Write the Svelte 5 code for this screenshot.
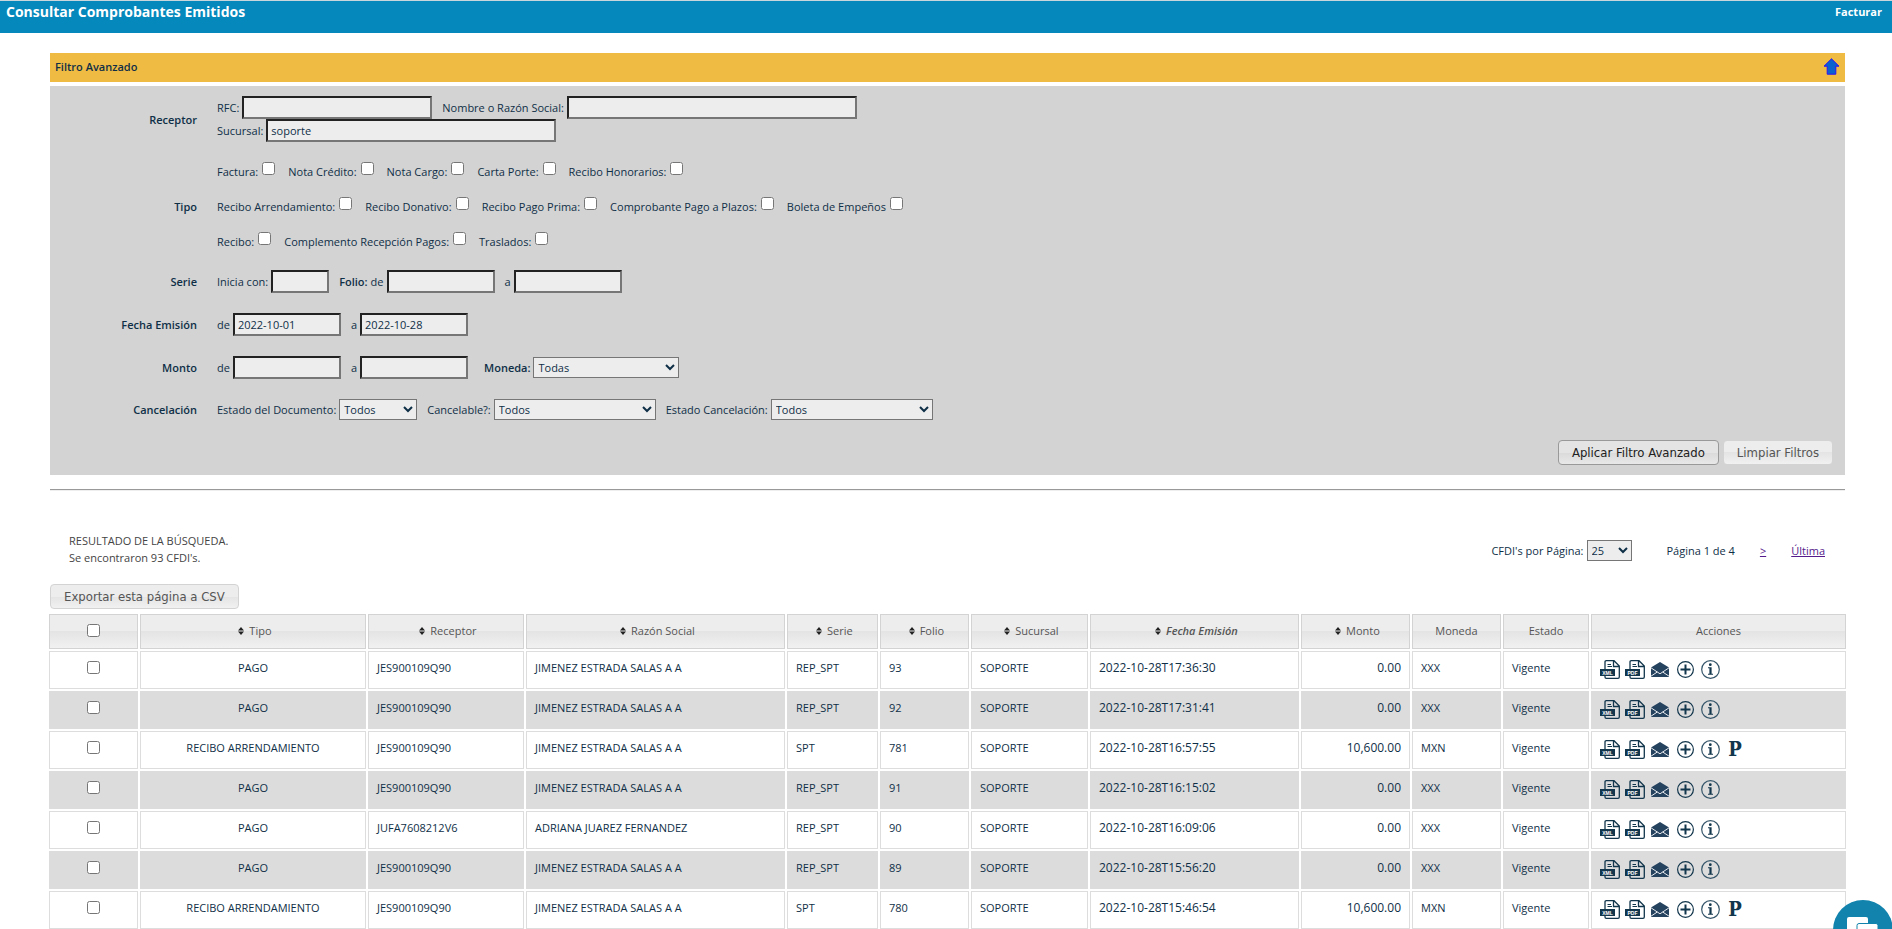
<script>
    const tipos = [
        ["Factura:", "Nota Crédito:", "Nota Cargo:", "Carta Porte:", "Recibo Honorarios:"],
        [
            "Recibo Arrendamiento:",
            "Recibo Donativo:",
            "Recibo Pago Prima:",
            "Comprobante Pago a Plazos:",
            "Boleta de Empeños",
        ],
        ["Recibo:", "Complemento Recepción Pagos:", "Traslados:"],
    ];

    const columns = [
        { name: "Tipo", width: 226, sort: true },
        { name: "Receptor", width: 156, sort: true },
        { name: "Razón Social", width: 259, sort: true },
        { name: "Serie", width: 91, sort: true },
        { name: "Folio", width: 89, sort: true },
        { name: "Sucursal", width: 117, sort: true },
        { name: "Fecha Emisión", width: 209, sort: true, active: true },
        { name: "Monto", width: 109, sort: true },
        { name: "Moneda", width: 89 },
        { name: "Estado", width: 86 },
        { name: "Acciones", width: 255 },
    ];

    const jimenez = { rfc: "JES900109Q90", nombre: "JIMENEZ ESTRADA SALAS A A" };
    const juarez = { rfc: "JUFA7608212V6", nombre: "ADRIANA JUAREZ FERNANDEZ" };
    const pago = { tipo: "PAGO", serie: "REP_SPT", monto: "0.00", moneda: "XXX" };
    const recibo = { tipo: "RECIBO ARRENDAMIENTO", serie: "SPT", monto: "10,600.00", moneda: "MXN", pagable: true };

    const cfdis = [
        { ...pago, ...jimenez, folio: 93, fecha: "2022-10-28T17:36:30" },
        { ...pago, ...jimenez, folio: 92, fecha: "2022-10-28T17:31:41" },
        { ...recibo, ...jimenez, folio: 781, fecha: "2022-10-28T16:57:55" },
        { ...pago, ...jimenez, folio: 91, fecha: "2022-10-28T16:15:02" },
        { ...pago, ...juarez, folio: 90, fecha: "2022-10-28T16:09:06" },
        { ...pago, ...jimenez, folio: 89, fecha: "2022-10-28T15:56:20" },
        { ...recibo, ...jimenez, folio: 780, fecha: "2022-10-28T15:46:54" },
    ];

    let sucursal = "soporte";
    let fechaDe = "2022-10-01";
    let fechaA = "2022-10-28";
    let selected = cfdis.map(() => false);

    function toggleAll(event) {
        selected = cfdis.map(() => event.target.checked);
    }
</script>

<header>
    <h1>Consultar Comprobantes Emitidos</h1>
    <a href="#facturar">Facturar</a>
</header>

<main>
    <div class="filter-title">
        <span>Filtro Avanzado</span>
        <button type="button" class="icon" aria-label="Ocultar filtro">
            <svg width="17" height="17" viewBox="0 0 17 17">
                <path d="M8.5 .8 16 8.2h-3.2v8H4.2v-8H1z" fill="#0a62cf" stroke="#2a12f5" />
            </svg>
        </button>
    </div>

    <form class="filter">
        <div class="filter-row">
            <strong>Receptor</strong>
            <div>
                <div class="fields">
                    <label>RFC: <input class="w-rfc" type="text" /></label>
                    <label>Nombre o Razón Social: <input class="w-name" type="text" /></label>
                </div>
                <div class="fields">
                    <label>Sucursal: <input class="w-name" type="text" bind:value={sucursal} /></label>
                </div>
            </div>
        </div>

        <div class="filter-row">
            <strong>Tipo</strong>
            <div class="tipos">
                {#each tipos as line}
                    <div class="checks">
                        {#each line as tipo}
                            <label>{tipo} <input type="checkbox" /></label>
                        {/each}
                    </div>
                {/each}
            </div>
        </div>

        <div class="filter-row">
            <strong>Serie</strong>
            <div class="fields">
                <label>Inicia con: <input class="w-serie" type="text" /></label>
                <label><b>Folio:</b> de <input type="text" /></label>
                <label>a <input type="text" /></label>
            </div>
        </div>

        <div class="filter-row">
            <strong>Fecha Emisión</strong>
            <div class="fields">
                <label>de <input type="text" bind:value={fechaDe} /></label>
                <label>a <input type="text" bind:value={fechaA} /></label>
            </div>
        </div>

        <div class="filter-row">
            <strong>Monto</strong>
            <div class="fields">
                <label>de <input type="text" /></label>
                <label>a <input type="text" /></label>
                <label class="apart"><b>Moneda:</b> <select class="w-moneda"><option>Todas</option></select></label>
            </div>
        </div>

        <div class="filter-row">
            <strong>Cancelación</strong>
            <div class="fields">
                <label>Estado del Documento: <select class="w-estado"><option>Todos</option></select></label>
                <label>Cancelable?: <select class="w-cancel"><option>Todos</option></select></label>
                <label>Estado Cancelación: <select class="w-cancel"><option>Todos</option></select></label>
            </div>
        </div>

        <div class="filter-buttons">
            <button type="button" class="btn hover">Aplicar Filtro Avanzado</button>
            <button type="button" class="btn">Limpiar Filtros</button>
        </div>
    </form>

    <hr />

    <div class="results">
        <p>RESULTADO DE LA BÚSQUEDA.<br />Se encontraron 93 CFDI's.</p>
        <div class="pager">
            <label>CFDI's por Página: <select class="w-page"><option>25</option></select></label>
            <span>Página 1 de 4</span>
            <a href="#siguiente">&gt;</a>
            <a href="#ultima">Última</a>
        </div>
    </div>

    <button type="button" class="btn">Exportar esta página a CSV</button>

    <table>
        <colgroup>
            <col style="width: 89px" />
            {#each columns as col}
                <col style="width: {col.width}px" />
            {/each}
        </colgroup>
        <thead>
            <tr>
                <th><input type="checkbox" aria-label="Todos" on:change={toggleAll} /></th>
                {#each columns as col}
                    <th class:sortable={col.sort} class:active={col.active}>
                        {#if col.sort}
                            <svg class="sort" width="6" height="8" viewBox="0 0 6 8">
                                <path d="M3 0 6 3.500H0zM0 4.500h6L3 8z" fill="#222" />
                            </svg>
                        {/if}
                        {col.name}
                    </th>
                {/each}
            </tr>
        </thead>
        <tbody>
            {#each cfdis as cfdi, i}
                <tr>
                    <td class="center"><input type="checkbox" aria-label="Folio {cfdi.folio}" bind:checked={selected[i]} /></td>
                    <td class="center">{cfdi.tipo}</td>
                    <td>{cfdi.rfc}</td>
                    <td>{cfdi.nombre}</td>
                    <td>{cfdi.serie}</td>
                    <td>{cfdi.folio}</td>
                    <td>SOPORTE</td>
                    <td class="figure">{cfdi.fecha}</td>
                    <td class="figure right">{cfdi.monto}</td>
                    <td>{cfdi.moneda}</td>
                    <td>Vigente</td>
                    <td class="actions">
                        <div>
                            {#each ["XML", "PDF"] as format}
                                <button type="button" class="icon" aria-label="Descargar {format}">
                                    <svg width="20" height="19" viewBox="0 0 20 19">
                                        <path
                                            d="M5 9V2Q5 .7 6.300 .7H14L19.300 6V17Q19.300 18.300 18 18.300H6.300Q5 18.300 5 17V16M13.500 1V6.500H19"
                                            fill="none"
                                            stroke="#12364c"
                                            stroke-width="1.300"
                                        />
                                        <path d="M7.500 4.500H11M7.500 6.500H12" stroke="#12364c" />
                                        <path d="M0 9H15V16H0z" fill="#12364c" />
                                        <text x="7.500" y="14.500">{format}</text>
                                    </svg>
                                </button>
                            {/each}
                            <button type="button" class="icon" aria-label="Enviar por correo">
                                <svg width="20" height="19" viewBox="0 0 20 19">
                                    <path d="M1 7.500 10 2l9 5.500V17H1z" fill="#25425f" />
                                    <path d="M1 7.800 7.300 12 1 16.200M19 7.800 12.700 12 19 16.200M7.300 12 10 13.800 12.700 12" fill="none" stroke="#fff" stroke-width=".9" />
                                </svg>
                            </button>
                            <button type="button" class="icon" aria-label="Agregar">
                                <svg width="20" height="19" viewBox="0 0 20 19">
                                    <circle cx="10.500" cy="9.500" r="7.900" fill="none" stroke="#12364c" stroke-width="1.200" />
                                    <path d="M10.500 4.500v10M5.500 9.500h10" stroke="#12364c" stroke-width="2" />
                                </svg>
                            </button>
                            <button type="button" class="icon" aria-label="Información">
                                <svg width="20" height="19" viewBox="0 0 20 19">
                                    <circle cx="10.500" cy="9.500" r="8.800" fill="none" stroke="#36566a" stroke-width="1.200" />
                                    <circle cx="10.300" cy="4.700" r="1.400" fill="#12364c" />
                                    <path d="M8 7.300h3.600v6.500h1.400v1H8v-1h1.400V8.300H8z" fill="#12364c" />
                                </svg>
                            </button>
                            {#if cfdi.pagable}
                                <button type="button" class="icon pay">P</button>
                            {/if}
                        </div>
                    </td>
                </tr>
            {/each}
        </tbody>
    </table>
</main>

<button type="button" class="chat" aria-label="Chat">
    <svg width="32" height="26" viewBox="0 0 32 26">
        <path d="M2 1h17q2 0 2 2v11q0 2-2 2H8l-4 4v-4H2q-2 0-2-2V3q0-2 2-2z" fill="#fff" />
        <path d="M12 7.500h17q2 0 2 2v10q0 2-2 2h-1v4l-4-4H12q-2 0-2-2v-10q0-2 2-2z" fill="#fff" stroke="#1283ad" />
    </svg>
</button>

<style>
    :global(body) {
        background-color: #fff;
        color: #0f2f47;
        font-family: "Open Sans", sans-serif;
        font-size: 11px;
        line-height: 17px;
    }

    header {
        display: flex;
        justify-content: space-between;
        align-items: flex-start;
        height: 29px;
        padding: 3px 10px 0 6px;
        border-top: 1px solid #c9d6dc;
        background-color: #0588bc;
    }

    header h1 {
        margin: 0;
        font-size: 14px;
        line-height: 16px;
        color: #fff;
    }

    header a {
        line-height: 16px;
        font-weight: 700;
        color: #fff;
        text-decoration: none;
    }

    main {
        margin: 20px 47px 0 50px;
    }

    .filter-title {
        display: flex;
        justify-content: space-between;
        align-items: center;
        height: 27px;
        margin-bottom: 4px;
        padding: 0 5px 2px;
        background-color: #efbb43;
        font-weight: 600;
    }

    .icon {
        display: block;
        padding: 0;
        border: none;
        background: none;
        cursor: pointer;
    }

    .icon svg {
        display: block;
    }

    .filter {
        display: flex;
        flex-direction: column;
        gap: 20px;
        padding: 10px 0;
        background-color: #d3d3d3;
    }

    .filter-row {
        display: grid;
        grid-template-columns: 147px 1fr;
        gap: 20px;
        align-items: center;
    }

    .filter-row strong {
        text-align: right;
    }

    strong,
    b {
        font-weight: 600;
    }

    .fields {
        display: flex;
        gap: 10px;
    }

    label {
        display: flex;
        align-items: center;
        gap: 3px;
    }

    .apart {
        margin-left: 6px;
    }

    .tipos {
        display: flex;
        flex-direction: column;
        gap: 17px;
    }

    .checks {
        display: flex;
        gap: 13px;
        height: 18px;
    }

    .checks label {
        gap: 4px;
    }

    .checks input {
        align-self: flex-start;
    }

    input[type="checkbox"] {
        width: 13px;
        height: 13px;
        margin: 0;
    }

    input[type="text"],
    select {
        box-sizing: border-box;
        border-radius: 0;
        background-color: #ededed;
        color: #0f2f47;
        font-family: inherit;
        font-size: 11px;
    }

    input[type="text"] {
        width: 108px;
        height: 23px;
        padding: 0 3px;
        border: 2px solid;
        border-color: #222 #767676 #767676 #222;
    }

    select {
        height: 21px;
        border: 1px solid #767676;
    }

    input.w-rfc {
        width: 190px;
    }

    input.w-name {
        width: 290px;
    }

    input.w-serie {
        width: 58px;
    }

    .w-moneda {
        width: 146px;
    }

    .w-estado {
        width: 78px;
    }

    .w-cancel {
        width: 162px;
    }

    .w-page {
        width: 45px;
    }

    .filter-buttons {
        display: flex;
        justify-content: flex-end;
        gap: 4px;
        padding-right: 12px;
    }

    .btn {
        height: 25px;
        padding: 0 13px;
        border: 1px solid #d3d3d3;
        border-radius: 4px;
        background: linear-gradient(#ededed 50%, #e4e4e4 50%, #f1f1f1);
        color: #555;
        font-family: "DejaVu Sans Condensed", "DejaVu Sans", sans-serif;
        font-size: 13px;
        cursor: pointer;
    }

    .btn.hover,
    .btn:hover {
        border-color: #999;
        background: linear-gradient(#e4e4e4 50%, #dadada 50%, #e8e8e8);
        color: #212121;
    }

    hr {
        height: 1px;
        margin: 14px 0 0;
        border: none;
        border-top: 1px solid #999;
        background-color: #eee;
    }

    .results {
        display: flex;
        justify-content: space-between;
        margin: 41px 20px 15px 19px;
    }

    .results p {
        margin: 0 0 3px;
        color: #444;
    }

    .pager {
        display: flex;
        align-items: center;
    }

    .pager span {
        margin-left: 35px;
    }

    .pager a {
        margin-left: 25px;
        color: #551a8b;
    }

    table {
        width: calc(100% + 6px);
        margin: 3px -3px 0;
        table-layout: fixed;
        border-spacing: 2px;
    }

    th {
        height: 31px;
        padding: 0 0 2px;
        border: 1px solid #d3d3d3;
        background: linear-gradient(#ededed 50%, #e4e4e4 50%, #f1f1f1);
        color: #555;
        font-weight: 400;
    }

    th input,
    td input {
        display: block;
        margin: 0 auto !important;
    }

    th.sortable {
        padding-left: 4px;
    }

    th.active {
        font-weight: 600;
        font-style: italic;
    }

    .sort {
        margin-right: 2px;
    }

    td {
        height: 30px;
        padding: 0 8px 6px;
        border: 1px solid #ddd;
    }

    tbody tr:nth-child(even) td {
        border-color: #dcdcdc;
        background-color: #dcdcdc;
    }

    .center {
        text-align: center;
    }

    .right {
        text-align: right;
    }

    .figure {
        font-size: 12px;
    }

    .actions {
        padding-bottom: 2px;
    }

    .actions div {
        display: flex;
        gap: 5px;
        height: 19px;
    }

    .actions text {
        fill: #fff;
        font-size: 5px;
        font-weight: 700;
        text-anchor: middle;
    }

    .pay {
        width: 20px;
        color: #12364c;
        font: bold 20px/19px "DejaVu Serif Condensed", "DejaVu Serif", serif;
    }

    .chat {
        position: fixed;
        right: -1px;
        bottom: -31px;
        width: 60px;
        height: 60px;
        padding: 0;
        border: none;
        border-radius: 50%;
        background-color: #1283ad;
        cursor: pointer;
    }
</style>
